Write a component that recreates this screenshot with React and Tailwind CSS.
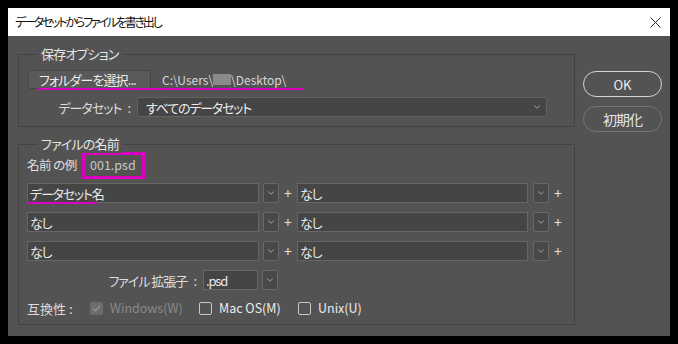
import { ChevronDown } from "lucide-react";

const FONT = {
  fontFamily: '"Noto Sans CJK JP", "Noto Sans", sans-serif',
};

function Dropdown({ className = "" }) {
  return (
    <div
      className={`w-[16px] h-[20px] rounded-[2px] bg-[#484848] border border-[#686868] flex items-center justify-center ${className}`}
    >
      <ChevronDown size={10} strokeWidth={2} className="text-[#b4b4b4]" />
    </div>
  );
}

function Field({ text, width }) {
  return (
    <div
      className={`${width} h-[20px] bg-[#454545] border border-[#666666] flex items-center px-[2px] text-[13px] leading-none tracking-[-1.2px] text-[#e8e8e8]`}
    >
      {text}
    </div>
  );
}

function NameRow({ left, right, className = "" }) {
  return (
    <div className={`flex items-center ${className}`}>
      <Field text={left} width="w-[232px]" />
      <Dropdown className="ml-[4px]" />
      <span className="w-[18px] text-center text-[14px] leading-none text-[#e0e0e0]">+</span>
      <Field text={right} width="w-[231px]" />
      <Dropdown className="ml-[5px]" />
      <span className="w-[18px] text-center text-[14px] leading-none text-[#e0e0e0]">+</span>
    </div>
  );
}

function Legend({ children }) {
  return (
    <span className="absolute -top-[10px] left-[19px] px-[3px] bg-[#535353] text-[13px] leading-[18px] tracking-[-0.8px] text-[#e6e6e6]">
      {children}
    </span>
  );
}

export default function App() {
  return (
    <div
      className="w-[678px] h-[344px] bg-black pt-[8px] pl-[8px] [font-feature-settings:'palt']"
      style={FONT}
    >
      <div className="w-[662px] h-[328px] flex flex-col">
        <div className="h-[28px] bg-white flex items-center justify-between pl-[7px] pr-[8px]">
          <span className="text-[12px] leading-none tracking-[-2.2px] text-[#111]">
            データセットからファイルを書き出し
          </span>
          <svg width="11" height="11" viewBox="0 0 11 11" className="mr-[1px]">
            <path d="M0.5 0.5 L10.5 10.5 M10.5 0.5 L0.5 10.5" stroke="#222" strokeWidth="1" />
          </svg>
        </div>

        <div className="flex-1 bg-[#535353] flex pl-[10px] pt-[18px]">
          <div className="w-[557px] flex flex-col">
            {/* 保存オプション */}
            <div className="relative h-[73px] border border-[#434343] pt-[15px] pl-[9px]">
              <Legend>保存オプション</Legend>
              <div className="relative flex items-center">
                <div className="w-[123px] h-[19px] bg-[#5a5a5a] border border-[#474747] rounded-[2px] flex items-center pl-[10px] text-[13px] leading-none tracking-[-0.9px] text-[#ececec]">
                  フォルダーを選択...
                </div>
                <div className="ml-[11px] flex items-center text-[12px] leading-none text-[#d6d6d6]">
                  <span>C:\Users\</span>
                  <span className="inline-block w-[18px] h-[11px] bg-[#8a8a8a]" />
                  <span>\Desktop\</span>
                </div>
                <div className="absolute left-[10px] top-[18px] w-[265px] h-[2px] bg-[#dc00c0] rounded-full" />
              </div>
              <div className="flex items-center mt-[8px]">
                <span className="w-[109px] flex justify-end items-center gap-[6px] pr-[6px] text-[13px] leading-none text-[#dcdcdc]">
                  <span className="tracking-[-1px]">データセット</span>
                  <span>:</span>
                </span>
                <div className="w-[410px] h-[20px] bg-[#454545] border border-[#626262] rounded-[2px] flex items-center justify-between pl-[8px] pr-[4px] text-[13px] leading-none tracking-[-1.2px] text-[#ececec]">
                  <span>すべてのデータセット</span>
                  <ChevronDown size={10} strokeWidth={2} className="text-[#b4b4b4]" />
                </div>
              </div>
            </div>

            {/* ファイルの名前 */}
            <div className="relative mt-[17px] h-[181px] border border-[#434343] pt-[7px] pl-[8px]">
              <Legend>ファイルの名前</Legend>
              <div className="flex items-center">
                <span className="w-[55px] text-[12.5px] leading-none tracking-[-0.5px] text-[#e0e0e0]">名前 の例</span>
                <div className="w-[63px] h-[27px] border-[3px] border-[#dc00c0] flex items-center pl-[5px] text-[12.5px] leading-none text-[#c8c8c8]">
                  001.psd
                </div>
              </div>
              <div className="relative mt-[4px]">
                <NameRow left="データセット名" right="なし" />
                <div className="absolute left-0 top-[19px] w-[70px] h-[2px] bg-[#dc00c0] rounded-full" />
              </div>
              <NameRow left="なし" right="なし" className="mt-[9px]" />
              <NameRow left="なし" right="なし" className="mt-[9px]" />
              <div className="flex items-center mt-[9px]">
                <span className="w-[176px] flex justify-end items-center gap-[6px] pr-[6px] text-[13px] leading-none text-[#dcdcdc]">
                  <span className="tracking-[-1px]">ファイル 拡張子</span>
                  <span>:</span>
                </span>
                <Field text=".psd" width="w-[55px]" />
                <Dropdown className="ml-[4px]" />
              </div>
              <div className="flex items-center mt-[12px] text-[12.5px] leading-none">
                <span className="w-[63px] text-[13px] text-[#dcdcdc]">互換性 :</span>
                <span className="w-[13px] h-[13px] rounded-[2px] bg-[#6c6c6c] flex items-center justify-center">
                  <svg width="9" height="9" viewBox="0 0 9 9">
                    <path d="M1.2 4.6 L3.5 6.9 L7.8 1.8" fill="none" stroke="#8f8f8f" strokeWidth="1.6" />
                  </svg>
                </span>
                <span className="ml-[7px] w-[89px] text-[#8a8a8a]">Windows(W)</span>
                <span className="w-[13px] h-[13px] rounded-[2px] border border-[#c8c8c8]" />
                <span className="ml-[7px] w-[79px] text-[#ececec]">Mac OS(M)</span>
                <span className="w-[13px] h-[13px] rounded-[2px] border border-[#c8c8c8]" />
                <span className="ml-[7px] text-[#ececec]">Unix(U)</span>
              </div>
            </div>
          </div>

          <div className="ml-[8px] pt-[17px] flex flex-col">
            <button className="w-[79px] h-[26px] rounded-full border-[1.5px] border-[#d4d4d4] text-[13px] leading-none text-[#ececec]">
              OK
            </button>
            <button className="mt-[9px] w-[79px] h-[26px] rounded-full border border-[#747474] text-[14px] leading-none tracking-[-1px] text-[#e6e6e6]">
              初期化
            </button>
          </div>
        </div>
      </div>
    </div>
  );
}
